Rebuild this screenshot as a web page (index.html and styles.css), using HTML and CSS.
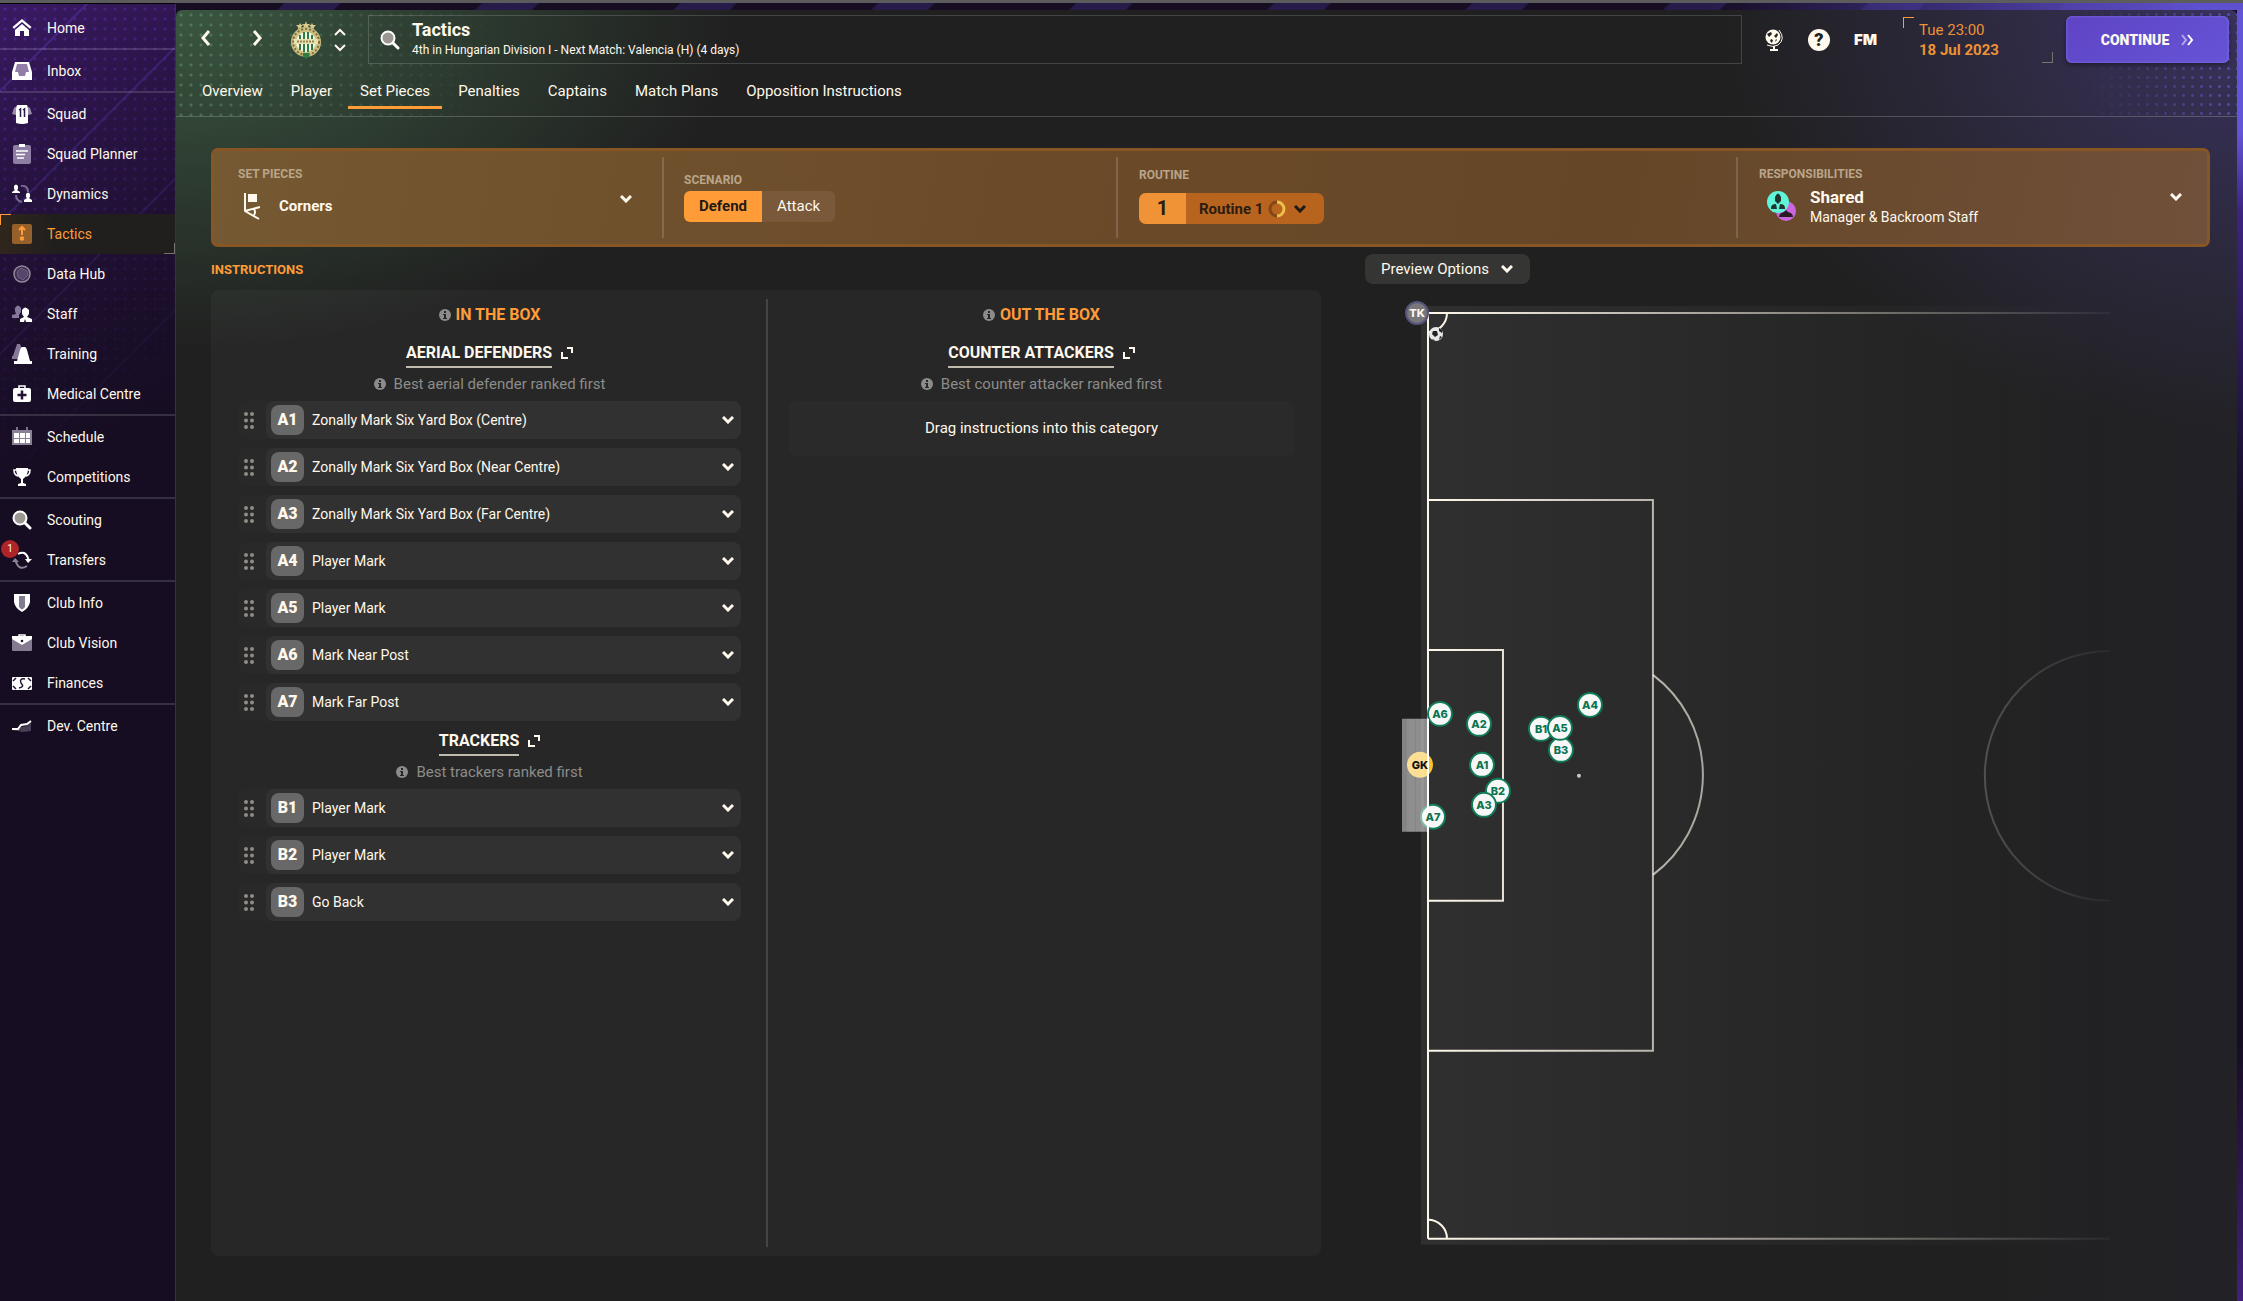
FILE: index.html
```html
<!DOCTYPE html>
<html lang="en">
<head>
    <meta charset="UTF-8">
    <meta name="viewport" content="width=device-width, initial-scale=1.0">
    <title>Tactics - Set Pieces</title>
    <link rel="stylesheet" href="styles.css">
</head>
<body>

    <!-- Shared icons -->
    <svg class="sprite" aria-hidden="true">
        <symbol id="info" viewBox="0 0 12 12"><circle cx="6" cy="6" r="6" fill="#8c8c8a"/><path d="M5 2h2v2H5zM4 5h3v4h1v1H4V9h1V6H4z" fill="#272727"/></symbol>
        <symbol id="expand" viewBox="0 0 12 12"><path d="M6 1h5v5M1 5v6h6" fill="none" stroke="#fff8ec" stroke-width="2"/></symbol>
        <symbol id="drag" viewBox="0 0 10 17"><g fill="#8f8c86"><circle cx="2" cy="2" r="2"/><circle cx="8" cy="2" r="2"/><circle cx="2" cy="8.5" r="2"/><circle cx="8" cy="8.5" r="2"/><circle cx="2" cy="15" r="2"/><circle cx="8" cy="15" r="2"/></g></symbol>
        <symbol id="search" viewBox="0 0 20 20"><circle cx="8" cy="8" r="6.5" fill="#9c9790" stroke="#fff" stroke-width="2"/><path d="M13 13l5 5" stroke="#fff" stroke-width="3" stroke-linecap="round"/></symbol>
    </svg>

    <div class="app">
        <nav class="sidebar">
            <ul>
                <li><a href="#"><svg viewBox="0 0 20 20"><path d="M10 1l9.5 8-1.5 1.7L10 4 2 10.7.5 9zM10 6l7 6v6h-5v-5H8v5H3v-6z" fill="#fff"/></svg>Home</a></li>
            </ul>
            <ul>
                <li><a href="#"><svg viewBox="0 0 20 20"><path d="M4 2h12l3 10v6H1v-6z" fill="#927ca8"/><path d="M3 1h14l3 10v8H0v-8zM5 3L3 11h3l1 4h6l1-4h3l-2-8z" fill="#fff" fill-rule="evenodd"/></svg>Inbox</a></li>
            </ul>
            <ul>
                <li><a href="#"><svg viewBox="0 0 20 20"><path d="M5 2L2 4 0 10l4 1zM15 2l3 2 2 6-4 1z" fill="#9b8caf"/><path d="M5 1h10l1 4v14q-6 2-12 0V5z" fill="#fff"/><path d="M7 6l1.5-1v8M11 6l1.5-1v8" fill="none" stroke="#2a1645" stroke-width="1.5"/></svg>Squad</a></li>
                <li><a href="#"><svg viewBox="0 0 20 20"><rect x="1" y="1" width="18" height="19" rx="2" fill="#8f7ea4"/><path d="M7 0h6v3H7z" fill="#fff"/><path d="M4 7h12M4 10.5h9M5 14h7" stroke="#fff" stroke-width="1.5"/></svg>Squad Planner</a></li>
                <li><a href="#"><svg viewBox="0 0 20 20"><path d="M9 2q7-1 7 6M4 11q0 6 6 7" fill="none" stroke="#7c6b93" stroke-width="2"/><path d="M2 2q2-3 4 0v3l-1 1 3 2v1H0V8l3-2-1-1zM14 10q2-3 4 0v3l-1 1 3 2v2h-8v-2l3-2-1-1z" fill="#fff"/></svg>Dynamics</a></li>
                <li class="active"><a href="#" aria-current="page"><svg viewBox="0 0 20 20"><rect width="20" height="20" rx="2" fill="#96602b"/><path d="M10 3v8M7 6l3-3 3 3" fill="none" stroke="#ff9c38" stroke-width="2"/><circle cx="10" cy="14.5" r="2.2" fill="#ff9c38"/></svg>Tactics</a></li>
                <li><a href="#"><svg viewBox="0 0 20 20"><circle cx="10" cy="10" r="8" fill="#3e2e54" stroke="#918a98" stroke-width="1.5"/><path d="M5 8l4-4 6 3 1 4-5 5-5-3z" fill="#55466a" stroke="#6e6080"/></svg>Data Hub</a></li>
                <li><a href="#"><svg viewBox="0 0 20 20"><path d="M3 4q3-5 6 0v4L7 11v3H0v-3l4-1-1-3z" fill="#86789a"/><path d="M10 6q3-5 7 0v4l-2 3 5 2v3h-6l-1-3-1 3H8v-3l4-2-2-3z" fill="#fff"/></svg>Staff</a></li>
                <li><a href="#"><svg viewBox="0 0 20 20"><path d="M5 0h3l3 8-4 7H0v-3h1z" fill="#86789a"/><path d="M10 3h3q1 0 2 3l3 11h2v3H2v-3h3l3-11q1-3 2-3z" fill="#fff"/></svg>Training</a></li>
                <li><a href="#"><svg viewBox="0 0 20 20"><path d="M7 4V2h6v2" fill="none" stroke="#fff" stroke-width="1.5"/><rect x="1" y="4" width="18" height="14" rx="2" fill="#fff"/><path d="M10 6.5v9M5.5 11h9" stroke="#241335" stroke-width="2.5"/></svg>Medical Centre</a></li>
            </ul>
            <ul>
                <li><a href="#"><svg viewBox="0 0 20 20"><path d="M5 0v5M15 0v5" stroke="#9a92a4" stroke-width="1.5"/><rect y="3" width="20" height="15" fill="#8a8197"/><path d="M2 6h5v5H2zM8 6h5v5H8zM14 6h4v5h-4zM2 12h5v4H2zM8 12h5v4H8zM14 12h4v4h-4z" fill="#fff"/></svg>Schedule</a></li>
                <li><a href="#"><svg viewBox="0 0 20 20"><path d="M5 3H2q0 5 4 6M15 3h3q0 5-4 6" fill="none" stroke="#fff" stroke-width="1.5"/><path d="M4 1h12q0 8-5 11v4l3 1v2H6v-2l3-1v-4Q4 9 4 1z" fill="#fff"/></svg>Competitions</a></li>
            </ul>
            <ul>
                <li><a href="#"><svg><use href="#search"/></svg>Scouting</a></li>
                <li><a href="#"><svg viewBox="0 0 20 20"><path d="M6 4q7-4 10 4l1 3" fill="none" stroke="#fff" stroke-width="2"/><path d="M13 9h7l-4 4z" fill="#fff"/><path d="M15 16q-8 5-11-4l-1-3" fill="none" stroke="#8b8296" stroke-width="2"/><path d="M0 12h7L3 8z" fill="#8b8296"/></svg>Transfers<span class="alert">1</span></a></li>
            </ul>
            <ul>
                <li><a href="#"><svg viewBox="0 0 20 20"><path d="M2 1h16v8q-1 6-8 10-7-4-8-10z" fill="#fff"/><path d="M7 3h6v11q-2 2-3 2.5Q9 16 7 14z" fill="#857b91"/></svg>Club Info</a></li>
                <li><a href="#"><svg viewBox="0 0 20 20"><rect y="4" width="20" height="14" rx="1" fill="#857b91"/><path d="M7 4V2h6v2" fill="none" stroke="#fff" stroke-width="1.5"/><path d="M0 3h20v3l-10 6L0 6z" fill="#fff"/><circle cx="10" cy="8" r="1.3" fill="#241335"/></svg>Club Vision</a></li>
                <li><a href="#"><svg viewBox="0 0 20 20"><rect y="4" width="20" height="13" rx="1" fill="#fff"/><path d="M13 6q-6-1-4 4 4 4-2 5M1 8l3-3M16 5l3 3M1 13l3 3M16 16l3-3" fill="none" stroke="#241335" stroke-width="1.5"/></svg>Finances</a></li>
            </ul>
            <ul>
                <li><a href="#"><svg viewBox="0 0 20 20"><path d="M0 14h5q3-1 4-3l6-1 4-4v9l-8 1z" fill="#4a4055"/><path d="M0 13h6l3-4 6-1 4-3" fill="none" stroke="#fff" stroke-width="2"/></svg>Dev. Centre</a></li>
            </ul>
        </nav>

        <div class="screen">
            <header class="topbar">
                <div class="titlebar">
                    <div class="history">
                        <button type="button" aria-label="Back"><svg viewBox="0 0 10 16"><path d="M8 1L2 8l6 7" fill="none" stroke="currentColor" stroke-width="3"/></svg></button>
                        <button type="button" aria-label="Forward"><svg viewBox="0 0 10 16"><path d="M2 1l6 7-6 7" fill="none" stroke="currentColor" stroke-width="3"/></svg></button>
                    </div>
                    <svg class="crest" viewBox="0 0 30 38">
                        <g fill="#dcc98a"><path d="M15 0l1 3h3l-2 2 1 2-3-1-3 1 1-2-2-2h3zM9 2l1 2h2l-2 2 1 2-2-1-2 1V6L5 4h3zM21 2l1 2h3l-2 2v2l-2-1-2 1 1-2-2-2h2z"/></g>
                        <circle cx="15" cy="21" r="15" fill="#cdbf84"/>
                        <circle cx="15" cy="21" r="13" fill="none" stroke="#7f7436" stroke-dasharray="2 2" stroke-width="2"/>
                        <circle cx="15" cy="21" r="10" fill="#f7f5e4"/>
                        <path d="M8 14h2v15H8zM12 11h2v20h-2zM16 11h2v20h-2zM20 14h2v15h-2z" fill="#2b7d45"/>
                        <path d="M3 18h24v5H3z" fill="#e8dfb2"/>
                        <path d="M6 20.5h18" stroke="#96884c" stroke-width="2" stroke-dasharray="2 1"/>
                        <path d="M12 32h6v3l-3 3-3-3z" fill="#2b7d45"/>
                    </svg>
                    <div class="stepper">
                        <button type="button" aria-label="Previous club"><svg viewBox="0 0 12 8"><path d="M1 7l5-5 5 5" fill="none" stroke="currentColor" stroke-width="2"/></svg></button>
                        <button type="button" aria-label="Next club"><svg viewBox="0 0 12 8"><path d="M1 1l5 5 5-5" fill="none" stroke="currentColor" stroke-width="2"/></svg></button>
                    </div>
                    <div class="finder">
                        <button type="button" aria-label="Search"><svg><use href="#search"/></svg></button>
                        <div>
                            <h1>Tactics</h1>
                            <p>4th in Hungarian Division I - Next Match: Valencia (H) (4 days)</p>
                        </div>
                    </div>
                    <div class="tools">
                        <button type="button" aria-label="World"><svg viewBox="0 0 20 22"><circle cx="9" cy="8" r="7.5" fill="#fff8ec"/><path d="M3 5l4-2 1 2-3 3zM10 7l3-3 1 2-2 3zM7 10l2 1-1 3-2-2zM12 10l1 1-2 2z" fill="#202020"/><path d="M15 1q7 9-1 15-5 3-11 0" fill="none" stroke="#fff8ec"/><path d="M10 17v4M6 21h8" stroke="#fff8ec" stroke-width="2"/></svg></button>
                        <button type="button" class="help">?</button>
                        <button type="button" class="fm">FM</button>
                    </div>
                    <div class="date corners">
                        <span>Tue 23:00</span>
                        <strong>18 Jul 2023</strong>
                    </div>
                    <button type="button" class="continue">CONTINUE <svg viewBox="0 0 13 12"><path d="M1 1l4 5-4 5" fill="none" stroke="#b5a8ee" stroke-width="2"/><path d="M7 1l4 5-4 5" fill="none" stroke="#fff" stroke-width="2"/></svg></button>
                </div>
                <nav class="tabs">
                    <a href="#">Overview</a>
                    <a href="#">Player</a>
                    <a href="#" class="current" aria-current="page">Set Pieces</a>
                    <a href="#">Penalties</a>
                    <a href="#">Captains</a>
                    <a href="#">Match Plans</a>
                    <a href="#">Opposition Instructions</a>
                </nav>
            </header>

            <main>
                <section class="options">
                    <div class="option">
                        <label for="piece">SET PIECES</label>
                        <div class="piece">
                            <svg viewBox="0 0 17 29"><path d="M1 1v18l14 8M1 19l15-4M10 17q2 3 0 6" fill="none" stroke="#fff8ec" stroke-width="2"/><path d="M4 2h9v8H4z" fill="#fff8ec"/></svg>
                            <select id="piece"><option>Corners</option></select>
                        </div>
                    </div>
                    <div class="option middle" role="radiogroup" aria-labelledby="scenario">
                        <span id="scenario" class="caption">SCENARIO</span>
                        <div class="toggle">
                            <label><input type="radio" name="scenario" checked><span>Defend</span></label>
                            <label><input type="radio" name="scenario"><span>Attack</span></label>
                        </div>
                    </div>
                    <div class="option">
                        <label for="routine">ROUTINE</label>
                        <div class="routine">
                            <span class="number">1</span>
                            <select id="routine"><option>Routine 1</option></select>
                            <svg viewBox="0 0 18 18"><path d="M9 2a7 7 0 0 0 0 14" fill="none" stroke="#834717" stroke-width="3"/><path d="M9 2a7 7 0 0 1 0 14" fill="none" stroke="#ecc04a" stroke-width="3"/></svg>
                        </div>
                    </div>
                    <div class="option">
                        <label for="duty">RESPONSIBILITIES</label>
                        <div class="duty">
                            <svg viewBox="0 0 29 31"><circle cx="19" cy="20" r="10" fill="#cc66e0"/><path d="M12 26q0-4 5-5l2-2 2 2q5 1 5 5z" fill="#291c22"/><circle cx="11" cy="11" r="11" fill="#5ff5d8"/><path d="M8 6q3-7 6 0v4l-3 3-3-3zM4 17q0-4 5-4l1 5H4zM18 17q0-4-5-4l-1 5h6z" fill="#21352f"/></svg>
                            <div>
                                <select id="duty"><option>Shared</option></select>
                                <p>Manager &amp; Backroom Staff</p>
                            </div>
                        </div>
                    </div>
                </section>

                <div class="board">
                    <section class="instructions">
                        <h2>INSTRUCTIONS</h2>
                        <div class="panel">
                            <div class="zone">
                                <h3><svg><use href="#info"/></svg>IN THE BOX</h3>
                                <h4><a href="#">AERIAL DEFENDERS</a><svg><use href="#expand"/></svg></h4>
                                <p class="hint"><svg><use href="#info"/></svg>Best aerial defender ranked first</p>
                                <ul class="roles">
                                    <li><svg><use href="#drag"/></svg><div><label for="a1">A1</label><select id="a1"><option>Zonally Mark Six Yard Box (Centre)</option></select></div></li>
                                    <li><svg><use href="#drag"/></svg><div><label for="a2">A2</label><select id="a2"><option>Zonally Mark Six Yard Box (Near Centre)</option></select></div></li>
                                    <li><svg><use href="#drag"/></svg><div><label for="a3">A3</label><select id="a3"><option>Zonally Mark Six Yard Box (Far Centre)</option></select></div></li>
                                    <li><svg><use href="#drag"/></svg><div><label for="a4">A4</label><select id="a4"><option>Player Mark</option></select></div></li>
                                    <li><svg><use href="#drag"/></svg><div><label for="a5">A5</label><select id="a5"><option>Player Mark</option></select></div></li>
                                    <li><svg><use href="#drag"/></svg><div><label for="a6">A6</label><select id="a6"><option>Mark Near Post</option></select></div></li>
                                    <li><svg><use href="#drag"/></svg><div><label for="a7">A7</label><select id="a7"><option>Mark Far Post</option></select></div></li>
                                </ul>
                                <h4><a href="#">TRACKERS</a><svg><use href="#expand"/></svg></h4>
                                <p class="hint"><svg><use href="#info"/></svg>Best trackers ranked first</p>
                                <ul class="roles">
                                    <li><svg><use href="#drag"/></svg><div><label for="b1">B1</label><select id="b1"><option>Player Mark</option></select></div></li>
                                    <li><svg><use href="#drag"/></svg><div><label for="b2">B2</label><select id="b2"><option>Player Mark</option></select></div></li>
                                    <li><svg><use href="#drag"/></svg><div><label for="b3">B3</label><select id="b3"><option>Go Back</option></select></div></li>
                                </ul>
                            </div>
                            <div class="zone">
                                <h3><svg><use href="#info"/></svg>OUT THE BOX</h3>
                                <h4><a href="#">COUNTER ATTACKERS</a><svg><use href="#expand"/></svg></h4>
                                <p class="hint"><svg><use href="#info"/></svg>Best counter attacker ranked first</p>
                                <p class="drop">Drag instructions into this category</p>
                            </div>
                        </div>
                    </section>

                    <section class="preview">
                        <button type="button" class="preview-options" aria-haspopup="true">Preview Options <svg viewBox="0 0 12 8"><path d="M1 1l5 5 5-5" fill="none" stroke="currentColor" stroke-width="3"/></svg></button>
                        <svg class="pitch" viewBox="0 0 710 949">
                            <defs>
                                <linearGradient id="turf"><stop offset="0" stop-color="#fff" stop-opacity=".07"/><stop offset="1" stop-color="#fff" stop-opacity="0"/></linearGradient>
                                <linearGradient id="chalk" gradientUnits="userSpaceOnUse" x1="28" y1="0" x2="710" y2="0"><stop offset="0" stop-color="#fff8ec"/><stop offset=".4" stop-color="#fff8ec" stop-opacity=".6"/><stop offset="1" stop-color="#fff8ec" stop-opacity="0.04"/></linearGradient>
                            </defs>
                            <rect x="21" y="10" width="689" height="939" fill="url(#turf)"/>
                            <g fill="none" stroke="url(#chalk)" stroke-width="2">
                                <path d="M28 17h682M28 943h682M28 204h225v551H28M28 354h75v251H28"/>
                                <path d="M253 379a125 125 0 0 1 0 200"/>
                                <path d="M710 355a125 125 0 0 0 0 250"/>
                                <path d="M47 17a19 19 0 0 1-19 19M28 924a19 19 0 0 1 19 19"/>
                            </g>
                            <path d="M28 17v926" stroke="#fff8ec" stroke-width="2"/>
                            <circle cx="179" cy="480" r="2" fill="#cfcac2"/>

                            <g><circle cx="36" cy="38" r="7" fill="#e8e8e8"/><path d="M33 35h4l1 4-3 2-3-3zM39 32l3 2v3l-3-2zM40 40l2 1-3 3zM31 43l4 1-1 1z" fill="#222"/></g>

                            <g class="token" transform="translate(141 433)"><circle r="12"/><text y="4">B1</text></g>
                            <g class="token" transform="translate(161 454)"><circle r="12"/><text y="4">B3</text></g>
                            <g class="token" transform="translate(98 495)"><circle r="12"/><text y="4">B2</text></g>
                            <g class="token" transform="translate(82 469)"><circle r="12"/><text y="4">A1</text></g>
                            <g class="token" transform="translate(79 428)"><circle r="12"/><text y="4">A2</text></g>
                            <g class="token" transform="translate(84 509)"><circle r="12"/><text y="4">A3</text></g>
                            <g class="token" transform="translate(190 409)"><circle r="12"/><text y="4">A4</text></g>
                            <g class="token" transform="translate(160 432)"><circle r="12"/><text y="4">A5</text></g>
                            <g class="token" transform="translate(40 418)"><circle r="12"/><text y="4">A6</text></g>
                            <g class="token" transform="translate(33 521)"><circle r="12"/></g>
                            <g class="token keeper" transform="translate(20 469)"><circle r="13"/></g>

                            <!-- goal net lies over the discs, under their labels -->
                            <path d="M2 423h26v113H2z" fill="#fff" opacity=".45"/>
                            <path d="M11 423v113M20 423v113" stroke="#fff" stroke-width="8" opacity=".08"/>
                            <path d="M28 423v113" stroke="#fff" stroke-width="2"/>
                            <g class="token" transform="translate(33 521)"><text y="4">A7</text></g>
                            <g class="token keeper" transform="translate(20 469)"><text y="4">GK</text></g>
                            <g class="token taker" transform="translate(17 17)"><circle r="11"/><text y="4">TK</text></g>
                        </svg>
                    </section>
                </div>
            </main>
        </div>
    </div>

</body>
</html>
```
FILE: styles.css
```css
* {
    box-sizing: border-box;
    margin: 0;
    padding: 0;
}

body {
    font-family: Roboto, "Liberation Sans", sans-serif;
    font-size: 14px;
    color: #fff8ec;
    background-color: #160d22;
}

ul {
    list-style: none;
}

a {
    color: inherit;
    text-decoration: none;
}

button, select {
    font: inherit;
    color: inherit;
    background: none;
    border: none;
    cursor: pointer;
}

/* drop-downs share one chevron */
select {
    appearance: none;
    background: url("data:image/svg+xml,%3Csvg xmlns='http://www.w3.org/2000/svg' width='12' height='8'%3E%3Cpath d='M1 1l5 5 5-5' fill='none' stroke='%23fff8ec' stroke-width='3'/%3E%3C/svg%3E") no-repeat right 7px center;
}

.sprite {
    display: none;
}

.app {
    display: grid;
    grid-template-columns: 176px 1fr;
    min-height: 100vh;
    padding-right: 6px;
    border-top: 3px solid #5c5c5c;
    background:
        repeating-linear-gradient(135deg, transparent 0 60px, rgba(90, 70, 190, 0.25) 62px 100px, transparent 102px 140px) top / 100% 7px no-repeat,
        linear-gradient(90deg, transparent 76%, #5f50d0 98%) top / 100% 7px no-repeat,
        linear-gradient(#6355d8, #6355d8 10%, #3c2480 16%, #160d22 40%, #160d22 80%, #43207a) right / 6px 100% no-repeat,
        #160d22;
}

/* Sidebar */
.sidebar {
    padding-top: 4px;
    border-top: 1px solid #000;
    border-right: 1px solid #352e58;
    background:
        linear-gradient(155deg, transparent, #160d22 36%),
        radial-gradient(circle, rgba(105, 45, 190, 0.5) 1px, transparent 2px) 0 0 / 10px 10px,
        repeating-linear-gradient(135deg, transparent 0 60px, rgba(90, 60, 190, 0.5) 61px 62px, transparent 63px 93px),
        linear-gradient(155deg, #3a1a64, #26123f 30%, #160d22 60%);
}

.sidebar ul {
    padding-top: 1px;
    border-bottom: 2px solid rgba(255, 255, 255, 0.14);
}

.sidebar ul:first-child {
    padding-top: 0;
}

.sidebar ul:last-child {
    border-bottom: none;
}

.sidebar a {
    position: relative;
    display: flex;
    align-items: center;
    gap: 15px;
    height: 40px;
    padding-left: 12px;
}

.sidebar svg {
    width: 20px;
    height: 20px;
}

.sidebar .active {
    color: #ff9c38;
    background: linear-gradient(90deg, #30261c, #211f1e 30%);
}

.active a::before, .active a::after,
.corners::before, .corners::after {
    content: "";
    position: absolute;
    width: 10px;
    height: 10px;
}

.active a::before, .corners::before {
    top: 0;
    left: 0;
    border-top: 1px solid #ff9c38;
    border-left: 1px solid #ff9c38;
}

.active a::after, .corners::after {
    right: 0;
    bottom: 0;
    border-right: 1px solid #77746e;
    border-bottom: 1px solid #77746e;
}

.alert {
    position: absolute;
    top: 0;
    left: 1px;
    width: 18px;
    border-radius: 50%;
    font-size: 10px;
    line-height: 18px;
    text-align: center;
    background-color: #ae2529;
}

/* Main screen */
.screen {
    display: flex;
    flex-direction: column;
    margin-top: 7px;
    border-radius: 6px 6px 0 0;
    background:
        radial-gradient(ellipse 560px 340px at 0 0, rgba(64, 100, 72, 0.8), transparent),
        radial-gradient(ellipse 520px 420px at 100% 0, rgba(72, 62, 130, 0.6), transparent),
        linear-gradient(90deg, transparent 85%, rgba(50, 42, 72, 0.15)),
        #202020;
}

.topbar {
    position: relative;
    display: flex;
    flex-direction: column;
    height: 107px;
    padding: 5px 8px 0 20px;
    border-bottom: 1px solid rgba(255, 255, 255, 0.2);
}

/* dotted corners, fading towards the middle */
.topbar::before, .topbar::after {
    content: "";
    position: absolute;
    top: 0;
    bottom: 0;
    width: 400px;
    pointer-events: none;
}

.topbar::before {
    left: 0;
    background: radial-gradient(circle, rgba(115, 165, 130, 0.45) 1px, transparent 2px) 0 0 / 10px 10px;
    mask-image: linear-gradient(100deg, #000, transparent 80%);
}

.topbar::after {
    right: 0;
    background: radial-gradient(circle, rgba(100, 90, 200, 0.7) 1px, transparent 2px) 0 0 / 9px 9px;
    mask-image: linear-gradient(260deg, #000, transparent 40%);
}

.titlebar {
    position: relative;
    z-index: 1;
    display: flex;
    align-items: center;
    height: 49px;
}

.history {
    display: flex;
    gap: 31px;
}

.history button {
    width: 20px;
    height: 20px;
}

.history svg {
    width: 10px;
    height: 16px;
}

.crest {
    width: 30px;
    height: 38px;
    margin-left: 24px;
}

.stepper {
    display: grid;
    gap: 8px;
    margin: 0 22px 0 13px;
}

.stepper button {
    display: flex;
}

.stepper svg {
    width: 12px;
    height: 8px;
}

.finder {
    display: flex;
    flex: 1;
    align-items: center;
    gap: 12px;
    height: 49px;
    padding-left: 11px;
    border: 1px solid rgba(255, 255, 255, 0.16);
}

.finder button {
    display: flex;
}

.finder svg {
    width: 20px;
    height: 20px;
}

.finder h1 {
    font-size: 18px;
    line-height: 20px;
}

.finder p {
    font-size: 12px;
    line-height: 20px;
}

.tools {
    display: flex;
    align-items: center;
    gap: 24px;
    margin: 0 26px 0 22px;
}

.tools button {
    display: flex;
    justify-content: center;
}

.tools svg {
    width: 20px;
    height: 22px;
}

.tools .help {
    width: 22px;
    border-radius: 50%;
    font-size: 18px;
    font-weight: 900;
    line-height: 22px;
    color: #202020;
    background-color: #fff8ec;
}

.tools .fm {
    font-family: Inter, sans-serif;
    font-size: 15px;
    font-weight: 900;
}

.date {
    position: relative;
    display: flex;
    flex-direction: column;
    width: 150px;
    height: 46px;
    padding: 3px 0 0 16px;
    font-size: 15px;
    line-height: 20px;
    color: #ee9236;
}

.continue {
    display: flex;
    align-items: center;
    justify-content: center;
    gap: 12px;
    width: 163px;
    height: 47px;
    margin-left: 13px;
    border-radius: 6px;
    font-size: 14px;
    font-weight: 900;
    background: linear-gradient(150deg, #5f44c4, #6554d6);
    box-shadow: inset 0 0 3px #8474ea, 0 2px 5px rgba(0, 0, 0, 0.4);
}

.continue svg {
    width: 13px;
    height: 12px;
}

.tabs {
    position: relative;
    z-index: 1;
    display: flex;
    gap: 4px;
    margin-top: 7px;
    margin-left: -6px;
}

.tabs a {
    height: 38px;
    padding: 0 12px;
    border-bottom: 3px solid transparent;
    font-size: 15px;
    line-height: 40px;
}

.tabs .current {
    border-bottom-color: #ff9c38;
}

main {
    display: flex;
    flex: 1;
    flex-direction: column;
    padding: 31px 27px 45px 35px;
}

/* Set piece options */
.options {
    display: grid;
    grid-template-columns: 448fr 454fr 620fr 471fr;
    padding: 6px 0;
    border: 3px solid #885625;
    border-radius: 7px;
    background: linear-gradient(100deg, #755932, #6b4a28 40%, #654727 70%, #70503a);
}

.option {
    position: relative;
    display: flex;
    flex-direction: column;
    height: 81px;
    padding: 9px 0 0 21px;
    border-left: 2px solid rgba(255, 255, 255, 0.15);
}

.option:first-child {
    padding-left: 24px;
    border-left: none;
}

.option > label, .caption {
    font-size: 12px;
    font-weight: 700;
    line-height: 16px;
    color: #b9a58a;
}

.middle {
    gap: 3px;
    padding-top: 15px;
    padding-left: 20px;
}

.piece, .duty {
    display: flex;
    align-items: center;
    gap: 18px;
    padding: 9px 23px 0 6px;
}

.piece svg {
    width: 17px;
    height: 29px;
}

.piece select {
    flex: 1;
    height: 30px;
    font-size: 15px;
    font-weight: 700;
    background-position: right 7px top 4px;
}

.toggle {
    display: flex;
    font-size: 15px;
    line-height: 31px;
}

.toggle input {
    position: absolute;
    opacity: 0;
}

.toggle span {
    display: block;
    padding: 0 15px;
    border-radius: 0 6px 6px 0;
    background-color: #79593a;
}

.toggle label:first-child span {
    border-radius: 6px 0 0 6px;
}

.toggle input:checked + span {
    font-weight: 700;
    color: #1f1a14;
    background-color: #ff9c38;
}

.option .routine {
    position: relative;
    display: flex;
    width: 185px;
    height: 31px;
    margin-top: 10px;
    border-radius: 7px;
    overflow: hidden;
    background-color: #b8641f;
    color: #2b1c10;
}

.option > label[for="routine"] {
    margin-top: 1px;
}

.number {
    width: 47px;
    font-size: 20px;
    font-weight: 700;
    line-height: 31px;
    text-align: center;
    background-color: #f09336;
}

.routine select {
    flex: 1;
    padding-left: 13px;
    font-size: 15px;
    font-weight: 700;
    background-image: url("data:image/svg+xml,%3Csvg xmlns='http://www.w3.org/2000/svg' width='12' height='8'%3E%3Cpath d='M1 1l5 5 5-5' fill='none' stroke='%231f1a14' stroke-width='3'/%3E%3C/svg%3E");
    background-position: right 18px center;
}

.routine svg {
    position: absolute;
    top: 7px;
    right: 38px;
    width: 18px;
    height: 18px;
}

.duty {
    gap: 14px;
    padding: 4px 18px 0 8px;
}

.duty > div {
    flex: 1;
}

.duty svg {
    width: 29px;
    height: 31px;
}

.duty select {
    width: 100%;
    height: 22px;
    font-size: 17px;
    font-weight: 700;
}

.duty p {
    line-height: 18px;
}

/* Instructions and pitch */
.board {
    display: grid;
    flex: 1;
    grid-template-columns: 1110fr 845fr;
    gap: 44px;
    margin-top: 7px;
}

.instructions {
    display: flex;
    flex-direction: column;
}

.instructions h2 {
    font-size: 13px;
    line-height: 32px;
    margin-bottom: 4px;
    color: #ff9c38;
}

.panel {
    display: grid;
    flex: 1;
    grid-template-columns: 1fr 1fr;
    padding: 9px 0;
    border-radius: 8px;
    background-color: rgba(255, 255, 255, 0.035);
}

.zone {
    padding: 0 25px 0 27px;
}

.zone + .zone {
    padding: 0 27px 0 21px;
    border-left: 2px solid rgba(255, 255, 255, 0.14);
}

.zone h3, .zone h4, .hint {
    display: flex;
    align-items: center;
    justify-content: center;
}

.zone h3 {
    gap: 5px;
    font-size: 16px;
    line-height: 32px;
    color: #ff9c38;
}

.zone h4 {
    gap: 9px;
    margin-top: 10px;
    font-size: 16px;
    line-height: 24px;
}

.zone h4 a {
    padding-bottom: 1px;
    border-bottom: 2px solid #bfb9ae;
}

.hint {
    gap: 8px;
    margin-bottom: 1px;
    font-size: 15px;
    line-height: 32px;
    color: #8c8c8a;
}

.zone h3 svg, .zone h4 svg, .hint svg {
    width: 12px;
    height: 12px;
}

.zone h4 svg {
    margin-bottom: 4px;
}

.roles {
    display: grid;
    gap: 9px;
}

.roles + h4 {
    margin-top: 8px;
}

.roles li {
    display: flex;
    align-items: center;
    gap: 12px;
    padding-left: 6px;
    border-radius: 8px;
    background-color: rgba(255, 255, 255, 0.01);
}

.roles svg {
    width: 10px;
    height: 17px;
}

.roles div {
    display: flex;
    flex: 1;
    align-items: center;
    gap: 8px;
    height: 38px;
    padding-left: 5px;
    border-radius: 8px;
    background-color: rgba(255, 255, 255, 0.04);
}

.roles label {
    width: 33px;
    border-radius: 8px;
    font-size: 16px;
    font-weight: 900;
    line-height: 30px;
    text-align: center;
    background-color: #686868;
}

.roles select {
    flex: 1;
    height: 38px;
}

.drop {
    border-radius: 6px;
    font-size: 15px;
    line-height: 55px;
    text-align: center;
    background-color: rgba(255, 255, 255, 0.015);
}

.preview-options {
    display: flex;
    align-items: center;
    gap: 12px;
    height: 30px;
    padding: 0 17px 0 16px;
    border-radius: 8px;
    font-size: 15px;
    background-color: #353534;
}

.preview-options svg {
    width: 12px;
    height: 8px;
}

.pitch {
    display: block;
    width: 84%;
    margin: 12px 0 0 35px;
}

.token circle {
    fill: #f7f7f7;
    stroke: #0f7d58;
    stroke-width: 2px;
}

.token text {
    font-family: Inter, sans-serif;
    font-size: 11px;
    font-weight: 800;
    text-anchor: middle;
    fill: #0b7450;
}

.keeper circle {
    fill: #f8c22e;
    stroke: none;
}

.keeper text {
    fill: #111;
}

.taker circle {
    fill: #77777c;
    stroke: #55557a;
}

.taker text {
    fill: #fff8ec;
}
```
